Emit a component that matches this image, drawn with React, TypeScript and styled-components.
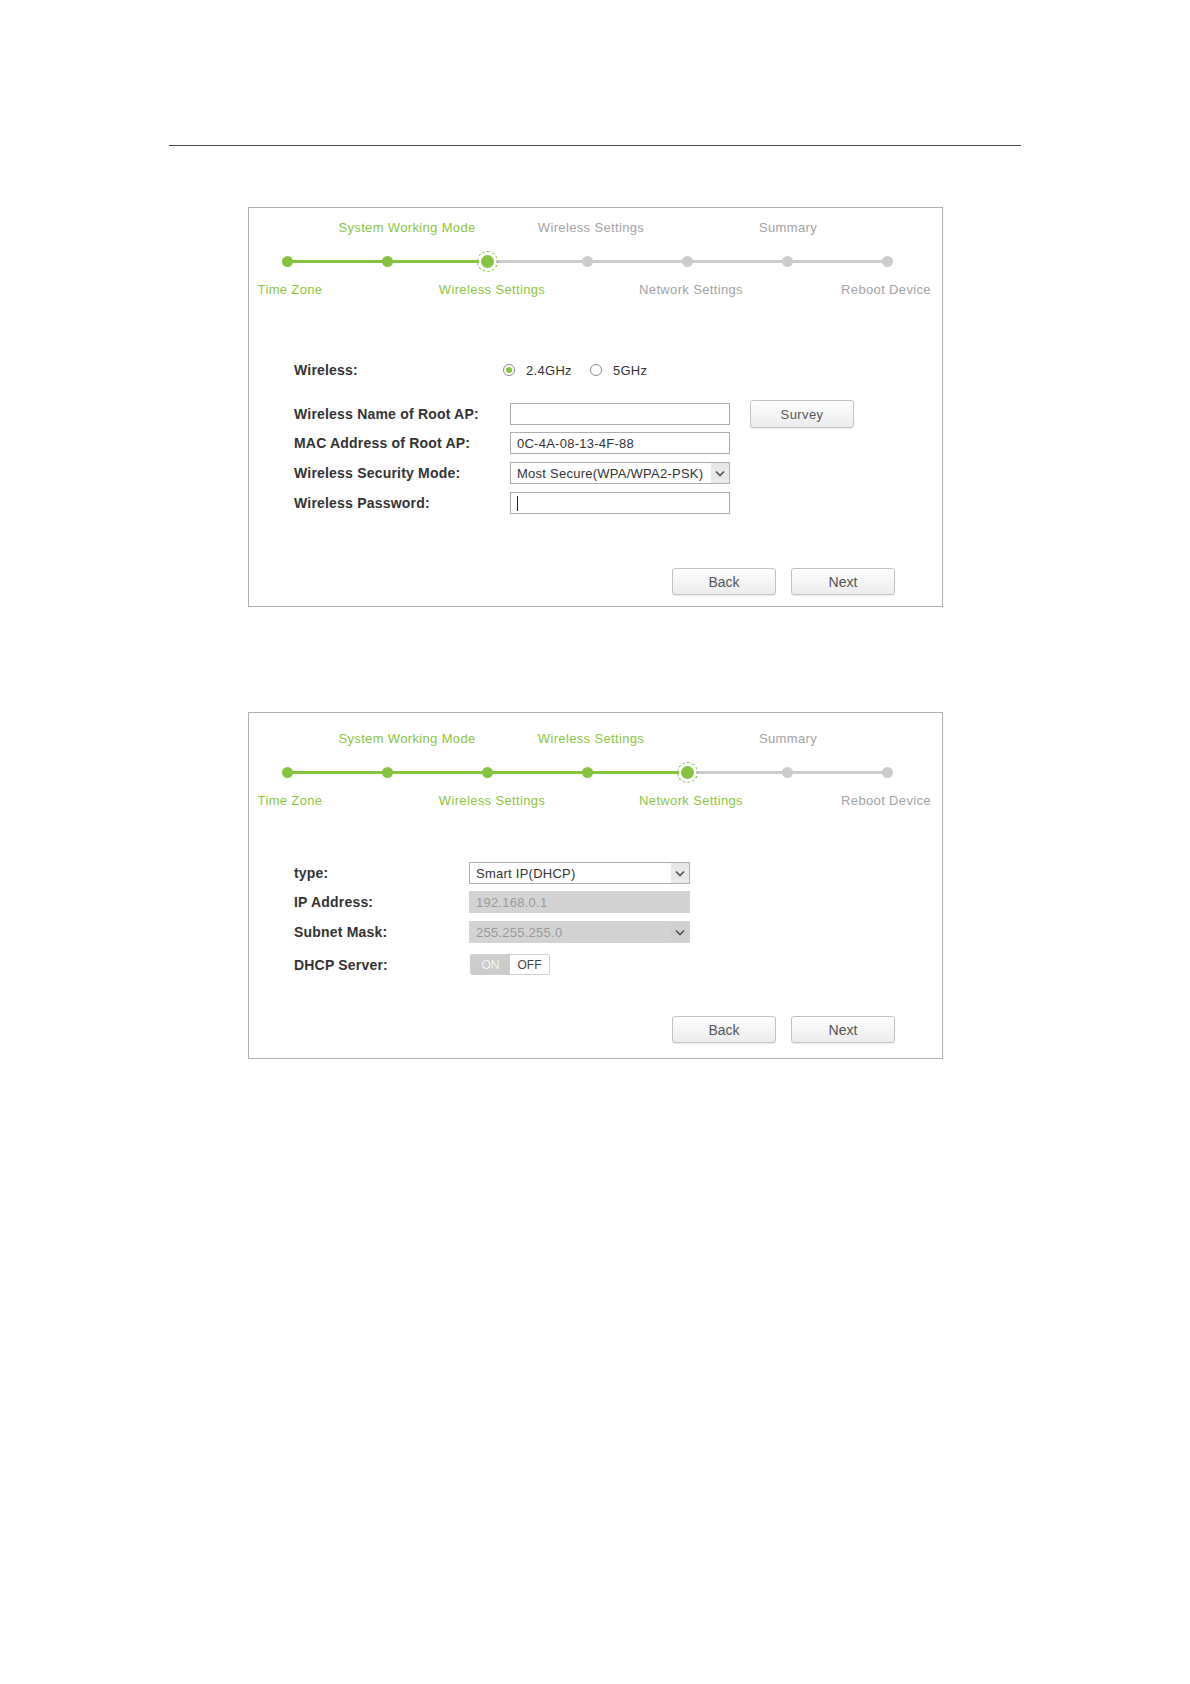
import React from 'react';
import styled, { createGlobalStyle, css } from 'styled-components';

const Colors = {
    green: '#84c441',
    greenText: '#8cc63f',
    greyDot: '#cccccc',
    greyText: '#a3a3a3',
    border: '#b0b0b0',
    label: '#333333',
    field: '#333333',
};

const GlobalStyle = createGlobalStyle`
    body {
        margin: 0;
        background: #ffffff;
        font-family: 'Liberation Sans', Arial, sans-serif;
    }
`;

type panelProps = {
    height: number;
    top: number;
    padTop: number;
};

type stepProps = {
    done?: boolean;
    active?: boolean;
    left?: 'green' | 'grey' | 'none';
    right?: 'green' | 'grey' | 'none';
};

type labelProps = {
    col: number;
    green?: boolean;
    shift?: number;
};

type formProps = {
    labelWidth: number;
};

const Page = styled.div`
    width: 1190px;
    min-height: 1684px;
    padding-top: 145px;
    box-sizing: border-box;
`;

const Rule = styled.div`
    margin-left: 169px;
    width: 852px;
    height: 1px;
    background: #4a4a4a;
`;

const Panel = styled.div<panelProps>`
    margin-left: 248px;
    margin-top: ${(props) => props.top}px;
    width: 695px;
    height: ${(props) => props.height}px;
    box-sizing: border-box;
    border: 1px solid ${Colors.border};
    padding-top: ${(props) => props.padTop}px;
    display: flex;
    flex-direction: column;
`;

const Stepper = styled.div`
    margin-left: -12px;
    display: grid;
    grid-template-columns: repeat(7, 100px);
    grid-template-rows: 16px 20px 16px;
    row-gap: 15px;
`;

const StepLabel = styled.div<labelProps>`
    grid-column: ${(props) => props.col};
    justify-self: center;
    white-space: nowrap;
    font-size: 13px;
    line-height: 16px;
    letter-spacing: 0.35px;
    color: ${(props) => (props.green ? Colors.greenText : Colors.greyText)};
    transform: translateX(${(props) => props.shift || 0}px);
`;

const TopLabel = styled(StepLabel)`
    grid-row: 1;
`;

const BottomLabel = styled(StepLabel)`
    grid-row: 3;
    margin-top: -4px;
`;

const halfLine = (side: 'left' | 'right', tone?: 'green' | 'grey' | 'none') => css`
    content: '';
    position: absolute;
    top: 9px;
    ${side}: 0;
    width: 50%;
    height: 3px;
    background: ${tone === 'green' ? Colors.green : tone === 'grey' ? Colors.greyDot : 'transparent'};
`;

const StepCell = styled.div<stepProps>`
    grid-row: 2;
    position: relative;
    display: flex;
    align-items: center;
    justify-content: center;
    &::before {
        ${(props) => halfLine('left', props.left)}
    }
    &::after {
        ${(props) => halfLine('right', props.right)}
    }
`;

const Dot = styled.span<stepProps>`
    position: relative;
    z-index: 1;
    width: 11px;
    height: 11px;
    border-radius: 50%;
    background: ${(props) => (props.done || props.active ? Colors.green : Colors.greyDot)};
    ${(props) =>
        props.active &&
        css`
            width: 13px;
            height: 13px;
            box-shadow: 0 0 0 2px #fff;
            &::after {
                content: '';
                position: absolute;
                left: -4px;
                top: -4px;
                width: 21px;
                height: 21px;
                box-sizing: border-box;
                border-radius: 50%;
                border: 1px dashed ${Colors.green};
            }
        `}
`;

const Form = styled.div<formProps>`
    margin-left: 45px;
    display: grid;
    grid-template-columns: ${(props) => props.labelWidth}px auto;
    align-items: center;
    justify-content: start;
`;

const FieldLabel = styled.div`
    font-size: 14px;
    font-weight: bold;
    letter-spacing: 0.2px;
    color: ${Colors.label};
    white-space: nowrap;
`;

const FieldCell = styled.div`
    display: flex;
    align-items: center;
`;

const Row = styled.div<{ gap: number }>`
    display: contents;
    & > * {
        margin-bottom: ${(props) => props.gap}px;
    }
`;

const RadioGroup = styled.div`
    display: flex;
    align-items: center;
    margin-left: -7px;
    font-size: 13px;
    letter-spacing: 0.3px;
    color: ${Colors.field};
`;

const Radio = styled.span<{ checked?: boolean }>`
    width: 12px;
    height: 12px;
    box-sizing: border-box;
    border-radius: 50%;
    border: 1px solid #8a8a8a;
    background: #fff;
    margin-right: 11px;
    margin-left: ${(props) => (props.checked ? 0 : 18)}px;
    display: flex;
    align-items: center;
    justify-content: center;
    &::after {
        content: '';
        width: 6px;
        height: 6px;
        border-radius: 50%;
        background: ${(props) => (props.checked ? Colors.green : 'transparent')};
    }
`;

const fieldBox = css`
    box-sizing: border-box;
    height: 22px;
    border: 1px solid #aeaeae;
    background: #fff;
    font-family: 'Liberation Sans', Arial, sans-serif;
    font-size: 13px;
    letter-spacing: 0.25px;
    color: ${Colors.field};
    padding: 0 6px;
    display: flex;
    align-items: center;
`;

const TextBox = styled.div<{ width: number; disabled?: boolean }>`
    ${fieldBox}
    width: ${(props) => props.width}px;
    ${(props) =>
        props.disabled &&
        css`
            background: #d3d3d3;
            border-color: #d3d3d3;
            color: #9a9a9a;
        `}
`;

const Caret = styled.span`
    width: 1px;
    height: 15px;
    background: #222;
`;

const SelectBox = styled(TextBox)`
    padding-right: 0;
    justify-content: space-between;
`;

const Arrow = styled.span<{ disabled?: boolean }>`
    width: 18px;
    height: 20px;
    background: ${(props) => (props.disabled ? '#cfcfcf' : '#e8e8e8')};
    display: flex;
    align-items: center;
    justify-content: center;
`;

const Button = styled.div<{ width?: number }>`
    box-sizing: border-box;
    width: ${(props) => props.width || 104}px;
    height: 27px;
    border: 1px solid #c2c2c2;
    border-radius: 3px;
    background: linear-gradient(#ffffff, #ececec);
    box-shadow: 0 1px 1px rgba(0, 0, 0, 0.08);
    display: flex;
    align-items: center;
    justify-content: center;
    font-size: 14px;
    color: #555;
`;

const SurveyButton = styled(Button)`
    height: 28px;
    margin-left: 20px;
    font-size: 13px;
    letter-spacing: 0.4px;
`;

const ButtonBar = styled.div<{ top: number }>`
    margin-top: ${(props) => props.top}px;
    margin-right: 47px;
    display: flex;
    justify-content: flex-end;
    gap: 15px;
`;

const Toggle = styled.div`
    display: flex;
    height: 21px;
    margin-left: 1px;
    box-sizing: border-box;
    border: 1px solid #cfcfcf;
    border-radius: 2px;
    overflow: hidden;
    font-size: 12px;
`;

const ToggleHalf = styled.span<{ on?: boolean }>`
    width: ${(props) => (props.on ? 39 : 39)}px;
    display: flex;
    align-items: center;
    justify-content: center;
    background: ${(props) => (props.on ? '#cccccc' : '#ffffff')};
    color: ${(props) => (props.on ? '#f4f4f4' : '#444')};
`;

const Chevron = () => (
    <svg width="10" height="7" viewBox="0 0 10 7">
        <path d="M1 1.5 L5 5.5 L9 1.5" fill="none" stroke="#555" strokeWidth="1.6" />
    </svg>
);

type StepDef = { current: number };

const Steps = ({ current }: StepDef) => {
    const tops = [
        { col: 2, text: 'System Working Mode', shift: 20 },
        { col: 4, text: 'Wireless Settings', shift: 4 },
        { col: 6, text: 'Summary', shift: 1 },
    ];
    const bottoms = [
        { col: 1, text: 'Time Zone', shift: 3 },
        { col: 3, text: 'Wireless Settings', shift: 5 },
        { col: 5, text: 'Network Settings', shift: 4 },
        { col: 7, text: 'Reboot Device', shift: -1 },
    ];
    return (
        <Stepper>
            {tops.map((t) => (
                <TopLabel key={t.text} col={t.col} shift={t.shift} green={t.col <= current}>
                    {t.text}
                </TopLabel>
            ))}
            {[1, 2, 3, 4, 5, 6, 7].map((i) => (
                <StepCell
                    key={i}
                    style={{ gridColumn: i }}
                    left={i === 1 ? 'none' : i <= current ? 'green' : 'grey'}
                    right={i === 7 ? 'none' : i < current ? 'green' : 'grey'}
                >
                    <Dot done={i < current} active={i === current} />
                </StepCell>
            ))}
            {bottoms.map((b) => (
                <BottomLabel key={b.text} col={b.col} shift={b.shift} green={b.col <= current}>
                    {b.text}
                </BottomLabel>
            ))}
        </Stepper>
    );
};

const WirelessPanel = () => (
    <Panel top={61} height={400} padTop={12}>
        <Steps current={3} />
        <Form labelWidth={216} style={{ marginTop: 60 }}>
            <Row gap={22}>
                <FieldLabel>Wireless:</FieldLabel>
                <FieldCell>
                    <RadioGroup>
                        <Radio checked />
                        2.4GHz
                        <Radio />
                        5GHz
                    </RadioGroup>
                </FieldCell>
            </Row>
            <Row gap={4}>
                <FieldLabel>Wireless Name of Root AP:</FieldLabel>
                <FieldCell>
                    <TextBox width={220} />
                    <SurveyButton>Survey</SurveyButton>
                </FieldCell>
            </Row>
            <Row gap={8}>
                <FieldLabel>MAC Address of Root AP:</FieldLabel>
                <FieldCell>
                    <TextBox width={220}>0C-4A-08-13-4F-88</TextBox>
                </FieldCell>
            </Row>
            <Row gap={8}>
                <FieldLabel>Wireless Security Mode:</FieldLabel>
                <FieldCell>
                    <SelectBox width={220}>
                        Most Secure(WPA/WPA2-PSK)
                        <Arrow>
                            <Chevron />
                        </Arrow>
                    </SelectBox>
                </FieldCell>
            </Row>
            <Row gap={0}>
                <FieldLabel>Wireless Password:</FieldLabel>
                <FieldCell>
                    <TextBox width={220}>
                        <Caret />
                    </TextBox>
                </FieldCell>
            </Row>
        </Form>
        <ButtonBar top={54}>
            <Button>Back</Button>
            <Button>Next</Button>
        </ButtonBar>
    </Panel>
);

const NetworkPanel = () => (
    <Panel top={105} height={347} padTop={18}>
        <Steps current={5} />
        <Form labelWidth={175} style={{ marginTop: 49 }}>
            <Row gap={7}>
                <FieldLabel>type:</FieldLabel>
                <FieldCell>
                    <SelectBox width={221}>
                        Smart IP(DHCP)
                        <Arrow>
                            <Chevron />
                        </Arrow>
                    </SelectBox>
                </FieldCell>
            </Row>
            <Row gap={8}>
                <FieldLabel>IP Address:</FieldLabel>
                <FieldCell>
                    <TextBox width={221} disabled>
                        192.168.0.1
                    </TextBox>
                </FieldCell>
            </Row>
            <Row gap={11}>
                <FieldLabel>Subnet Mask:</FieldLabel>
                <FieldCell>
                    <SelectBox width={221} disabled>
                        255.255.255.0
                        <Arrow disabled>
                            <Chevron />
                        </Arrow>
                    </SelectBox>
                </FieldCell>
            </Row>
            <Row gap={0}>
                <FieldLabel>DHCP Server:</FieldLabel>
                <FieldCell>
                    <Toggle>
                        <ToggleHalf on>ON</ToggleHalf>
                        <ToggleHalf>OFF</ToggleHalf>
                    </Toggle>
                </FieldCell>
            </Row>
        </Form>
        <ButtonBar top={41}>
            <Button>Back</Button>
            <Button>Next</Button>
        </ButtonBar>
    </Panel>
);

export default function App() {
    return (
        <>
            <GlobalStyle />
            <Page>
                <Rule />
                <WirelessPanel />
                <NetworkPanel />
            </Page>
        </>
    );
}
